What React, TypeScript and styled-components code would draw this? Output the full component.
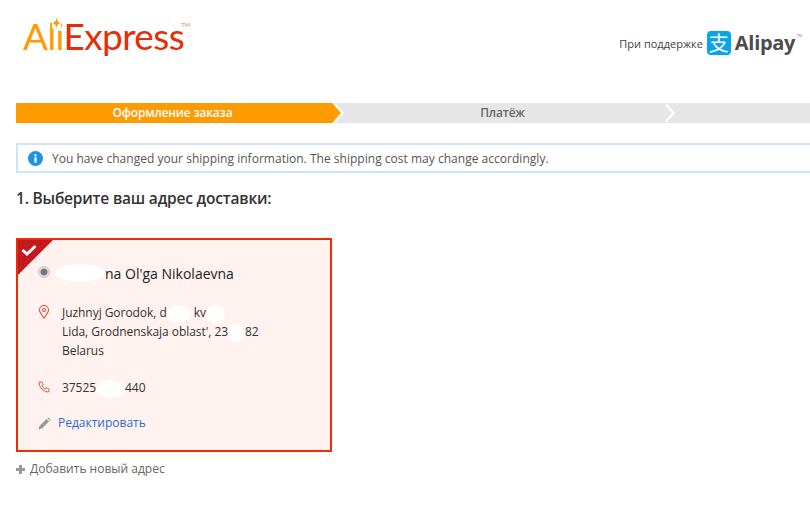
import React from 'react';
import styled, {createGlobalStyle} from 'styled-components';

const GlobalStyle = createGlobalStyle`
  html, body {
    margin: 0;
    padding: 0;
    background: #fff;
    overflow: hidden;
  }

  body {
    font-family: "Open Sans", "Liberation Sans", sans-serif;
    color: #333;
  }
`

const Page = styled.div`
  width: 810px;
  height: 527px;
  overflow: hidden;
  box-sizing: border-box;
  padding-left: 16px;
`

const Header = styled.div`
  display: flex;
  justify-content: space-between;
  align-items: flex-start;
  height: 103px;
  padding: 0 8px 0 7px;
  box-sizing: border-box;
`

const Logo = styled.div`
  position: relative;
  margin-top: 13px;
  font-family: "Lato", sans-serif;
  font-weight: 400;
  font-size: 37px;
  line-height: 46px;
  letter-spacing: -0.6px;
  white-space: nowrap;
  color: #e62e04;
`

const LogoOrange = styled.span`
  position: relative;
  color: #ff9a00;
`

const LogoStar = styled.svg`
  position: absolute;
  left: 29px;
  top: 4px;
  width: 9px;
  height: 12px;
`

const LogoMark = styled.span`
  position: absolute;
  left: 158px;
  top: 8px;
  font-size: 6px;
  line-height: 8px;
  letter-spacing: 0;
  color: #e88a70;
`

const Partner = styled.div`
  display: flex;
  align-items: center;
  margin-top: 31px;
  font-size: 11px;
  color: #444;
`

const AlipayIcon = styled.div`
  width: 24px;
  height: 24px;
  margin-left: 4px;
  border-radius: 4px;
  background: #08a5ea;
  color: #fff;
  font-family: "Noto Sans CJK SC", sans-serif;
  font-size: 20px;
  line-height: 23px;
  text-align: center;
`

const AlipayName = styled.div`
  margin-left: 4px;
  font-size: 20px;
  font-weight: 700;
  line-height: 24px;
  letter-spacing: -0.3px;
  color: #4c4c4c;
`

const AlipayMark = styled.sup`
  align-self: flex-start;
  margin: 2px 0 0 1px;
  font-size: 4px;
  line-height: 6px;
  color: #888;
`

const Steps = styled.div`
  display: flex;
  width: 980px;
  height: 20px;
`

const Step = styled.div<{$active?: boolean; $width: number; $layer: number; $shift?: number}>`
  position: relative;
  width: ${p => p.$width}px;
  flex: none;
  box-sizing: border-box;
  padding-left: ${p => Math.max(p.$shift ?? 0, 0)}px;
  padding-right: ${p => Math.max(-(p.$shift ?? 0), 0)}px;
  z-index: ${p => p.$layer};
  background: ${p => (p.$active ? '#ff9a00' : '#e6e6e6')};
  color: ${p => (p.$active ? '#fff' : '#666')};
  font-size: 12px;
  font-weight: 600;
  line-height: 20px;
  text-align: center;
  letter-spacing: -0.2px;

  &::before, &::after {
    content: "";
    position: absolute;
    top: 0;
    left: 100%;
    width: 9px;
    height: 20px;
    clip-path: polygon(0 0, 100% 50%, 0 100%);
  }

  &::before {
    margin-left: 3px;
    background: #fff;
    z-index: 1;
  }

  &::after {
    background: ${p => (p.$active ? '#ff9a00' : '#e6e6e6')};
    z-index: 2;
  }
`

const Notice = styled.div`
  display: flex;
  align-items: center;
  gap: 9px;
  width: 900px;
  height: 30px;
  margin-top: 20px;
  padding-left: 10px;
  box-sizing: border-box;
  border: 2px solid #cbe4ff;
  font-size: 12px;
  letter-spacing: 0.02px;
  color: #555;
`

const Heading = styled.h2`
  margin: 14px 0 0;
  font-size: 15.5px;
  font-weight: 600;
  line-height: 22px;
  letter-spacing: -0.2px;
  color: #333;
`

const AddressCard = styled.div`
  position: relative;
  width: 316px;
  height: 214px;
  margin-top: 29px;
  box-sizing: border-box;
  border: 2px solid #ea2e04;
  background: #fff2ef;
  padding: 21px 0 0 20px;
  overflow: hidden;
`

const Corner = styled.div`
  position: absolute;
  top: 0;
  left: 0;
  width: 35px;
  height: 35px;
  background: #c4191f;
  clip-path: polygon(0 0, 100% 0, 0 100%);
`

const CornerCheck = styled.svg`
  position: absolute;
  left: 3px;
  top: 4px;
  width: 16px;
  height: 12px;
`

const NameRow = styled.div`
  display: flex;
  align-items: center;
  height: 24px;
  font-size: 14px;
  font-weight: 500;
  color: #222;
  white-space: pre;
`

const Radio = styled.span`
  width: 12px;
  height: 12px;
  margin-right: 5px;
  border-radius: 50%;
  box-sizing: border-box;
  border: 1px solid #c4c4c4;
  background: radial-gradient(circle, #777 0 3px, #e6e6e6 4px);
  transform: translateY(-1px);
`

const Blot = styled.span<{$width: number; $height?: number}>`
  display: inline-block;
  vertical-align: middle;
  width: ${p => p.$width}px;
  height: ${p => p.$height ?? 18}px;
  margin: -2px 0;
  border-radius: 50%;
  background: #fff;
`

const InfoRow = styled.div<{$gap: number}>`
  display: flex;
  align-items: flex-start;
  margin-top: ${p => p.$gap}px;
  font-size: 12px;
  line-height: 19px;
  letter-spacing: -0.05px;
  color: #333;
`

const RowIcon = styled.svg`
  flex: none;
  width: 12px;
  height: 14px;
  margin: 2px 12px 0 0;
`

const EditRow = styled.div`
  display: flex;
  align-items: center;
  gap: 7px;
  margin-top: 17px;
  font-size: 12px;
  line-height: 18px;
  color: #2a6cd8;
`

const AddRow = styled.div`
  display: flex;
  align-items: center;
  gap: 5px;
  margin-top: 8px;
  font-size: 12px;
  line-height: 18px;
  color: #666;
`

export default function App() {
    return (
        <Page>
            <GlobalStyle/>

            <Header>
                <Logo>
                    <LogoOrange>Ali</LogoOrange>Express
                    <LogoStar viewBox="0 0 11 14">
                        <rect width="11" height="14" fill="#fff"/>
                        <path d="M5.5 0 C6 4.5 7 6 11 7 C7 8 6 9.5 5.5 14 C5 9.5 4 8 0 7 C4 6 5 4.5 5.5 0Z" fill="#ff9a00"/>
                    </LogoStar>
                    <LogoMark>TM</LogoMark>
                </Logo>
                <Partner>
                    При поддержке
                    <AlipayIcon>支</AlipayIcon>
                    <AlipayName>Alipay</AlipayName>
                    <AlipayMark>TM</AlipayMark>
                </Partner>
            </Header>

            <Steps>
                <Step $active $width={316} $layer={3} $shift={-3}>Оформление заказа</Step>
                <Step $width={331} $layer={2} $shift={10}>Платёж</Step>
                <Step $width={333} $layer={1}/>
            </Steps>

            <Notice>
                <svg width="15" height="15" viewBox="0 0 15 15">
                    <circle cx="7.5" cy="7.5" r="7.5" fill="#1a93e8"/>
                    <rect x="6.4" y="6.3" width="2.2" height="5.4" fill="#fff"/>
                    <rect x="6.4" y="3.3" width="2.2" height="2.1" fill="#fff"/>
                </svg>
                You have changed your shipping information. The shipping cost may change accordingly.
            </Notice>

            <Heading>1. Выберите ваш адрес доставки:</Heading>

            <AddressCard>
                <Corner/>
                <CornerCheck viewBox="0 0 16 12">
                    <path d="M1.5 6 L6 10 L14.5 2" fill="none" stroke="#fff" strokeWidth="3"/>
                </CornerCheck>

                <NameRow>
                    <Radio/>
                    <Blot $width={50}/>
                    na Ol'ga Nikolaevna
                </NameRow>

                <InfoRow $gap={18}>
                    <RowIcon viewBox="0 0 12 14">
                        <path d="M6 13 C3.5 9.5 1.5 7.5 1.5 5 A4.5 4.5 0 0 1 10.5 5 C10.5 7.5 8.5 9.5 6 13Z" fill="none" stroke="#e8483a" strokeWidth="1.1"/>
                        <circle cx="6" cy="5" r="1.6" fill="none" stroke="#e8483a" strokeWidth="1"/>
                    </RowIcon>
                    <div>
                        Juzhnyj Gorodok, d<Blot $width={24}/> kv<Blot $width={19}/><br/>
                        Lida, Grodnenskaja oblast', 23<Blot $width={17}/>82<br/>
                        Belarus
                    </div>
                </InfoRow>

                <InfoRow $gap={18}>
                    <RowIcon viewBox="0 0 24 24">
                        <path d="M22 16.92v3a2 2 0 0 1-2.18 2 19.79 19.79 0 0 1-8.63-3.07 19.5 19.5 0 0 1-6-6 19.79 19.79 0 0 1-3.07-8.67A2 2 0 0 1 4.11 2h3a2 2 0 0 1 2 1.72 12.84 12.84 0 0 0 .7 2.81 2 2 0 0 1-.45 2.11L8.09 9.91a16 16 0 0 0 6 6l1.27-1.27a2 2 0 0 1 2.11-.45 12.84 12.84 0 0 0 2.81.7A2 2 0 0 1 22 16.92z" fill="none" stroke="#e8483a" strokeWidth="2"/>
                    </RowIcon>
                    <div>
                        37525<Blot $width={29}/>440
                    </div>
                </InfoRow>

                <EditRow>
                    <svg width="13" height="13" viewBox="0 0 13 13">
                        <path d="M0.5 12.5 L1.5 9 L8.5 2 L11 4.5 L4 11.5 Z M9.3 1.2 L10.2 0.4 L12.6 2.8 L11.8 3.7 Z" fill="#999"/>
                    </svg>
                    Редактировать
                </EditRow>
            </AddressCard>

            <AddRow>
                <svg width="9" height="9" viewBox="0 0 9 9">
                    <path d="M3 0 H6 V3 H9 V6 H6 V9 H3 V6 H0 V3 H3 Z" fill="#999"/>
                </svg>
                Добавить новый адрес
            </AddRow>
        </Page>
    );
}
